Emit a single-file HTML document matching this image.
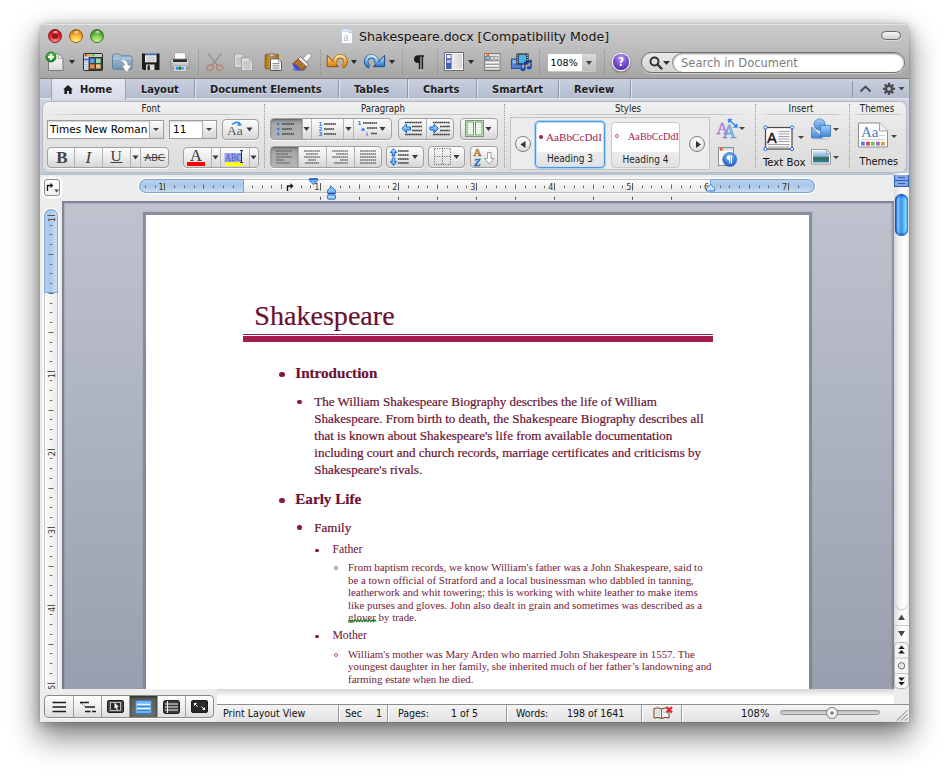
<!DOCTYPE html>
<html lang="en">
<head>
<meta charset="utf-8">
<title>Shakespeare.docx [Compatibility Mode]</title>
<style>
html,body{margin:0;padding:0;background:#fff;}
body{width:949px;height:777px;position:relative;overflow:hidden;font-family:"DejaVu Sans","Liberation Sans",sans-serif;color:#111;}
.a{position:absolute;}
svg{position:absolute;overflow:visible;}
#shadow{left:40px;top:24px;width:869px;height:698px;border-radius:5px 5px 0 0;
  box-shadow:0 14px 30px 2px rgba(0,0,0,.48),0 2px 12px rgba(0,0,0,.28),0 0 1px rgba(0,0,0,.5);}
#win{left:40px;top:24px;width:869px;height:698px;border-radius:5px 5px 0 0;overflow:hidden;background:#ededed;}
#titlebar{left:0;top:0;width:869px;height:54px;background:linear-gradient(#d2d2d2 0,#cacaca 2px,#bfbfbf 40%,#a5a5a5 100%);}
#titlebar:before{content:"";position:absolute;left:0;top:0;right:0;height:1px;background:#e3e3e3;}
#tbline{left:0;top:54px;width:869px;height:1px;background:#7b7b7b;}
#tabbar{left:0;top:55px;width:869px;height:20px;background:linear-gradient(#c9cfdd,#b3bbce);}
#ribbon{left:0;top:75px;width:869px;height:76px;background:linear-gradient(#cbd2df,#c6cede 96%,#b6becd 100%);}
#rpanel{left:3px;top:78px;width:863px;height:70px;border-radius:6px;background:linear-gradient(#f0f0f0,#e5e5e5 40%,#dcdcdc);box-shadow:0 0 0 1px #b4bac8;}
#rulerrow{left:0;top:151px;width:869px;height:26px;background:#ececec;}
#docarea{left:22px;top:177px;width:832px;height:496px;background:linear-gradient(#bec3ce,#999fae 98.4%,#999fae);box-shadow:inset 0 0 2px 2px rgba(100,106,124,.6),inset 1px 1px 1px 1px rgba(100,106,124,.4);overflow:hidden;}
#page{left:84px;top:14px;width:663px;height:520px;background:#fff;box-shadow:0 0 1px 3px rgba(122,128,144,.78);}
#vrcol{left:0;top:177px;width:22px;height:488px;background:#ececec;}
#sbcol{left:854px;top:149px;width:15px;height:531px;background:linear-gradient(90deg,#dcdcdc,#f6f6f6 40%,#fff 70%,#eee);}
#hstrip{left:0;top:665px;width:854px;height:15px;background:linear-gradient(#d9d9d9,#fff 50%,#fff);}
#statusline{left:0;top:680px;width:869px;height:1px;background:#8e8e8e;}
#status{left:0;top:681px;width:869px;height:17px;background:linear-gradient(#f4f4f4,#e2e2e2);}
#pc{left:-40px;top:-24px;width:949px;height:777px;}
.tl{width:14px;height:14px;border-radius:50%;top:29px;box-sizing:border-box;}
#tl-r{left:48px;background:radial-gradient(circle at 50% 95%,#ff9a9a 0,#f4383c 40%,#d81c28 65%,#8e0c14 100%);border:1px solid #8c1a1e;}
#tl-y{left:69px;background:radial-gradient(circle at 50% 95%,#fff08a 0,#fbc848 40%,#ee8f1a 65%,#a8500a 100%);border:1px solid #9a6414;}
#tl-g{left:90px;background:radial-gradient(circle at 50% 95%,#d8f5a0 0,#8fd455 40%,#52aa34 65%,#256a18 100%);border:1px solid #3e7a2a;}
.tl:after{content:"";position:absolute;left:3.500px;top:.5px;width:5px;height:3px;border-radius:50%;background:linear-gradient(rgba(255,255,255,.9),rgba(255,255,255,.1));}
#tl-r:before{content:"";position:absolute;left:3px;top:2.800px;width:6px;height:6px;border-radius:50%;background:#8f1a22;}
#wtitle{left:359px;top:29px;font-size:12.55px;line-height:16px;white-space:nowrap;color:#111;text-shadow:0 1px 0 rgba(255,255,255,.35);}
#pill{left:881px;top:31px;width:20px;height:9px;border-radius:5px;box-sizing:border-box;border:1px solid #6a6a6a;background:linear-gradient(#f4f4f4,#cfcfcf);box-shadow:0 1px 0 rgba(255,255,255,.4);}
.sep{width:0;border-left:1px dotted #8c8c8c;top:50px;height:25px;}
.dd{width:0;height:0;border-left:3.5px solid transparent;border-right:3.5px solid transparent;border-top:4px solid #2a2a2a;}
#zoombox{left:548px;top:54px;width:48px;height:17px;background:linear-gradient(#d9d9d9,#bdbdbd);box-shadow:0 1px 0 rgba(255,255,255,.35);}
#zoombox i{position:absolute;left:0;top:0;width:34px;height:17px;background:#fff;}
#zoombox b{position:absolute;left:2.500px;top:1px;font-weight:normal;font-size:9.500px;line-height:16px;color:#000;}
#help{left:613px;top:53.500px;width:16px;height:16px;border-radius:50%;background:radial-gradient(circle at 50% 25%,#b79af0 0,#7a4fd6 45%,#4a229e 100%);box-shadow:0 0 0 1.300px #f3f0fa,0 1px 2px 1.500px rgba(0,0,0,.3);color:#fff;font:bold 11.500px/16px "DejaVu Sans Condensed","DejaVu Sans",sans-serif;text-align:center;}
#search{left:641px;top:52px;width:264px;height:21px;border-radius:11px;box-sizing:border-box;border:1px solid #6f6f6f;background:linear-gradient(#e9e9e9,#d4d4d4);box-shadow:0 1px 0 rgba(255,255,255,.45);}
#search i{position:absolute;left:31px;top:0;right:0;bottom:0;border-radius:10px;background:#fff;box-shadow:inset 0 1px 2px rgba(0,0,0,.45),-1px 0 0 #8a8a8a;}
#search b{position:absolute;left:39px;top:2px;font-weight:normal;font-size:11.500px;line-height:17px;color:#7d7d7d;white-space:nowrap;}
#pr{left:-40px;top:-24px;width:949px;height:777px;}
.tab{top:80px;height:20px;font:bold 11px/20px "DejaVu Sans Condensed","DejaVu Sans",sans-serif;color:#1c1c1c;text-shadow:0 1px 0 rgba(255,255,255,.55);white-space:nowrap;}
.tsep{top:79px;height:19px;width:1px;background:#8f97ab;box-shadow:1px 0 0 rgba(235,240,250,.7);}
#tabhome{left:52px;top:79px;width:73px;height:21px;background:linear-gradient(#e4e8f1,#d5dbe8);box-shadow:-1px 0 0 #9aa2b5,1px 0 0 #9aa2b5;}
#tabbot{left:40px;top:98px;width:869px;height:2px;background:linear-gradient(#dfe4ee,#d3d9e6);}
.gt{top:103px;height:12px;font:9.6px/12px "DejaVu Sans Condensed","DejaVu Sans",sans-serif;color:#222;text-align:center;white-space:nowrap;}
.gl{top:114px;height:1px;background:linear-gradient(90deg,rgba(190,190,190,0),#c4c4c4 15%,#c4c4c4 85%,rgba(190,190,190,0));}
.vsep{top:104px;height:64px;width:0;border-left:1px dotted #9a9a9a;}
.btn{box-sizing:border-box;border:1px solid #a0a0a0;border-radius:4px;background:linear-gradient(#fcfcfc,#ececec 50%,#d6d6d6);box-shadow:0 1px 0 rgba(255,255,255,.8);}
.btn u{position:absolute;top:0;bottom:0;width:1px;background:#b4b4b4;}
.btn s{position:absolute;top:0;bottom:0;background:linear-gradient(#8f8f8f,#a9a9a9 30%,#b4b4b4);box-shadow:inset 0 1px 2px rgba(0,0,0,.35);}
.fld{box-sizing:border-box;border:1px solid #9d9d9d;background:#fff;box-shadow:inset 0 1px 1px rgba(0,0,0,.18);font:10.5px/17px "DejaVu Sans",sans-serif;color:#000;white-space:nowrap;}
.fld i{position:absolute;top:0;bottom:0;right:0;width:13px;background:linear-gradient(#fdfdfd,#d6d6d6);border-left:1px solid #a9a9a9;}
.d2{width:0;height:0;border-left:3px solid transparent;border-right:3px solid transparent;border-top:3.800px solid #444;}
.lbl{font:11px/14px "DejaVu Sans Condensed","DejaVu Sans",sans-serif;color:#111;white-space:nowrap;}
#gal{left:510px;top:117px;width:200px;height:53px;box-sizing:border-box;border:1px solid #c2c2c2;background:#ececec;}
.tile{box-sizing:border-box;border:1px solid #c9c9c9;border-radius:4px;background:linear-gradient(#fff 0,#fff 66%,#ececec 67%,#e2e2e2 100%);overflow:hidden;}
.tile b{position:absolute;left:0;right:0;bottom:1.700px;text-align:center;font:normal 10px/13px "DejaVu Sans Condensed","DejaVu Sans",sans-serif;color:#222;}
.tile em{position:absolute;top:8px;font:normal 11.2px/14px "Liberation Serif",serif;color:#a21c4d;white-space:nowrap;}
.circ{width:16px;height:16px;border-radius:50%;box-sizing:border-box;border:1px solid #7d7d7d;background:linear-gradient(#fff,#dedede);}
#pu{left:-40px;top:-24px;width:949px;height:777px;}
#hr{left:139px;top:179px;width:676px;height:14px;border-radius:7px;box-sizing:border-box;box-shadow:inset 0 0 0 1px #bdbdbd,0 0 0 1.500px rgba(255,255,255,.8);background:linear-gradient(#fdfdfd,#f4f4f4 45%,#e6e6e6);overflow:hidden;}
#hrL{left:0;top:0;width:105px;height:14px;background:linear-gradient(#bcd5f0,#a9c8ea 45%,#c9def3);box-shadow:inset 0 0 0 1px #7fa5d3;border-radius:7px 0 0 7px;}
#hrR{left:571px;top:0;width:105px;height:14px;background:linear-gradient(#bcd5f0,#a9c8ea 45%,#c9def3);box-shadow:inset 0 0 0 1px #7fa5d3;border-radius:0 7px 7px 0;}
#tabsel{left:44px;top:179px;width:16px;height:17px;box-sizing:border-box;border:1px solid #8f8f8f;border-radius:3px;background:linear-gradient(#fff,#f0f0f0);box-shadow:0 0 0 2.500px rgba(255,255,255,.85);}
#vr{left:44px;top:209px;width:14px;height:500px;border-radius:7px 7px 0 0;box-sizing:border-box;box-shadow:inset 0 0 0 1px #c6c6c6,0 0 0 1.500px rgba(255,255,255,.8);background:linear-gradient(90deg,#fdfdfd,#f4f4f4 45%,#e9e9e9);overflow:hidden;}
#vrT{left:0;top:0;width:14px;height:84px;background:linear-gradient(90deg,#b5d0ee,#a9c8ea 45%,#cfe1f4);box-shadow:inset 0 0 0 1px #7fa5d3;border-radius:7px 7px 0 0;}
#split{left:894px;top:175px;width:15px;height:12px;background:#2f5fb8;}
#split i{position:absolute;left:1px;width:13px;height:5px;background:#86a9e3;}
#split i:after{content:"";position:absolute;left:3px;right:3px;top:2px;height:1px;background:#2f5fb8;}
#thumb{left:895px;top:194px;width:13px;height:42px;border-radius:6.500px;background:linear-gradient(90deg,#1446c0 0,#3f8cf0 14%,#8fd0ff 24%,#56a8f6 34%,#3f92f0 50%,#62c8fc 72%,#86e6ff 84%,#3f8fe8 100%);box-shadow:inset 0 2px 2px rgba(20,60,170,.7),inset 0 -2px 2px rgba(20,60,170,.6),0 0 1px #123a90;}
#trkend{left:895px;top:236px;width:13px;height:373px;border-radius:0 0 6.500px 6.500px;background:linear-gradient(90deg,#d9d9d9,#f3f3f3 35%,#fff 70%,#f4f4f4);box-shadow:0 1px 1px rgba(0,0,0,.25);}
#page div{white-space:nowrap;font-family:"Liberation Serif",serif;color:#6a1131;-webkit-text-stroke:0.2px #6a1131;}
.ttl{font-size:28.08px;}
.h1{font-size:15.12px;font-weight:bold;}
.b2{font-size:13.03px;}
.b3{font-size:11.75px;-webkit-text-stroke:0 !important;}
.b4{font-size:10.9px;-webkit-text-stroke:0 !important;color:#74173a !important;}
.rule{background:#a21c4d;}
.bd{border-radius:50%;background:#8a1740;}
.oc{border-radius:50%;border:.8px solid #a8557a;box-sizing:border-box;}
.gw{text-decoration:none;}
#ps{left:-40px;top:-24px;width:949px;height:777px;}
#vbbg{left:40px;top:689px;width:177px;height:33px;background:#ececec;}
#vb{left:43.500px;top:694.500px;width:170.500px;height:23px;box-sizing:border-box;border:1px solid #8a8a8a;border-radius:4px;background:linear-gradient(#fefefe,#efefef 50%,#dedede);box-shadow:0 1px 0 rgba(255,255,255,.9);overflow:hidden;}
#vb u{position:absolute;top:0;bottom:0;width:1px;background:#9d9d9d;}
#vb s{position:absolute;top:0;bottom:0;left:85px;width:27px;background:linear-gradient(#5a5a5a,#6e6e6e);box-shadow:inset 0 1px 3px rgba(0,0,0,.6);}
.st{top:707.400px;font:10.500px/13px "DejaVu Sans Condensed","DejaVu Sans",sans-serif;color:#111;white-space:nowrap;}
.ss{top:705px;width:1px;height:17px;background:#9a9a9a;box-shadow:1px 0 0 #fff;}
#sbar2{left:217px;top:704px;width:692px;height:1px;background:#8e8e8e;}
#zt{left:780px;top:710px;width:100px;height:5px;box-sizing:border-box;border-radius:3px;border:1px solid #8f8f8f;background:linear-gradient(#b9b9b9,#dcdcdc);}
#zk{left:826px;top:707px;width:11.500px;height:11.500px;box-sizing:border-box;border-radius:50%;border:1px solid #7d7d7d;background:radial-gradient(circle,#777 0,#888 1.300px,#f6f6f6 2.200px,#dcdcdc 100%);}

</style>
</head>
<body>
<div class="a" id="shadow"></div>
<div class="a" id="win">
  <div class="a" id="titlebar"></div>
  <div class="a" id="tbline"></div>
  <div class="a" id="tabbar"></div>
  <div class="a" id="ribbon"></div>
  <div class="a" id="rpanel"></div>
  <div class="a" id="rulerrow"></div>
  <div class="a" id="vrcol"></div>
  <div class="a" id="sbcol"></div>
  <div class="a" id="hstrip"></div>
  <div class="a" id="statusline"></div>
  <div class="a" id="status"></div>
<div class="a" id="pc">
<div class="a tl" id="tl-r"></div><div class="a tl" id="tl-y"></div><div class="a tl" id="tl-g"></div>
<svg style="left:341px;top:28px" width="12" height="16" viewBox="0 0 13 16" preserveAspectRatio="none"><path d="M.5.5h8l4 4v11H.5z" fill="#fdfdfd" stroke="#b9c3cf"/><path d="M8.5.5v4h4" fill="#e8eef5" stroke="#b9c3cf"/><rect x="1" y="1" width="7" height="3" fill="#cfe3f7"/><text x="2.500" y="13.500" font-family="Liberation Serif,serif" font-size="12.500" fill="#8fc0e6">a</text></svg>
<div class="a" id="wtitle">Shakespeare.docx [Compatibility Mode]</div>
<div class="a" id="pill"></div>
<!-- toolbar icons inserted below -->
<!--ICONS_START--><svg style="left:0;top:0" width="949" height="110" viewBox="0 0 949 110">
<defs>
<linearGradient id="gPage" x1="0" y1="0" x2="0" y2="1"><stop offset="0" stop-color="#ffffff"/><stop offset="1" stop-color="#d9d9d9"/></linearGradient>
<radialGradient id="gGreen" cx=".5" cy=".35" r=".7"><stop offset="0" stop-color="#7fe070"/><stop offset=".6" stop-color="#2aa52a"/><stop offset="1" stop-color="#0f6e14"/></radialGradient>
<linearGradient id="gFolder" x1="0" y1="0" x2="0" y2="1"><stop offset="0" stop-color="#a9c4dc"/><stop offset="1" stop-color="#6f93b3"/></linearGradient>
<linearGradient id="gOrange" x1="0" y1="0" x2="0" y2="1"><stop offset="0" stop-color="#ffd98a"/><stop offset=".5" stop-color="#f6a93a"/><stop offset="1" stop-color="#d9801a"/></linearGradient>
<linearGradient id="gBlue" x1="0" y1="0" x2="0" y2="1"><stop offset="0" stop-color="#bfe3fb"/><stop offset=".5" stop-color="#6db3e6"/><stop offset="1" stop-color="#2f78bf"/></linearGradient>
<linearGradient id="gClip" x1="0" y1="0" x2="1" y2="0"><stop offset="0" stop-color="#a86c10"/><stop offset=".45" stop-color="#dba034"/><stop offset="1" stop-color="#a86c10"/></linearGradient>
<linearGradient id="gPrn" x1="0" y1="0" x2="0" y2="1"><stop offset="0" stop-color="#f2f2f2"/><stop offset="1" stop-color="#a9a9a9"/></linearGradient>
<linearGradient id="gSide" x1="0" y1="0" x2="1" y2="0"><stop offset="0" stop-color="#ffffff"/><stop offset="1" stop-color="#d2d2d2"/></linearGradient>
</defs>
<!-- new document -->
<g>
<path d="M48.500 54h10l4.500 4.500V70.500H48.500z" fill="url(#gPage)" stroke="#7a7a7a" stroke-width="1"/>
<path d="M58.500 54v4.500h4.500z" fill="#fafafa" stroke="#8a8a8a" stroke-width=".7"/>
<circle cx="51" cy="57" r="5" fill="url(#gGreen)" stroke="#14691a" stroke-width=".8"/>
<path d="M48 57h6M51 54v6" stroke="#fff" stroke-width="2.200"/>
</g>
<!-- template gallery -->
<g>
<rect x="83.5" y="53.5" width="19" height="17" rx="1" fill="#3b3b3b" stroke="#2a2a2a"/>
<rect x="84" y="54" width="18" height="3" fill="#c9c9c9"/>
<circle cx="86" cy="55.3" r="1.2" fill="#e33"/><circle cx="89.6" cy="55.3" r="1.2" fill="#f5a623"/><circle cx="93.2" cy="55.3" r="1.2" fill="#3c3"/>
<rect x="84" y="57" width="4.5" height="13" fill="#dfe6f2"/>
<rect x="84" y="58.5" width="4.5" height="2" fill="#3d74d6"/>
<path d="M84.6 62.5h3.2M84.6 64.5h3.2M84.6 66.5h3.2M84.6 68.5h3.2" stroke="#9fb0c8" stroke-width=".8"/>
<rect x="90" y="58.5" width="4.6" height="4.6" fill="#5a9be8"/><rect x="96" y="58.5" width="4.6" height="4.6" fill="#8fe0b6"/>
<rect x="90" y="64.3" width="4.6" height="4.2" fill="#f0894a"/><rect x="96" y="64.3" width="4.6" height="4.2" fill="#f6c37a"/>
</g>
<!-- open folder -->
<g>
<path d="M112.500 56q0-2 2-2h5.500l1.500 1.800h8.500q2 0 2 2V67.500q0 1.800-1.800 1.800h-15.900q-1.800 0-1.800-1.800z" fill="url(#gFolder)" stroke="#55779a" stroke-width=".8"/>
<path d="M113 58.800h19" stroke="#c7dbec" stroke-width=".8"/>
<path d="M119.300 60q7.500-2 9 5.300h3.300l-5 7.200-5-7.200h3q-.6-3.800-5.300-5.300z" fill="#fff" stroke="#8a8a8a" stroke-width=".6"/>
</g>
<!-- save floppy -->
<g>
<path d="M142 53.500h17.500v16.500h-16l-1.500-1.500z" fill="#1c1c1c"/>
<rect x="145" y="53.500" width="11.500" height="8.800" fill="#f4f4f4"/>
<rect x="145" y="53.500" width="11.500" height="1.800" fill="#3f6fb8"/>
<path d="M146.200 57.200h9.200M146.200 59h9.200M146.200 60.800h9.200" stroke="#a9a9a9" stroke-width=".8"/>
<rect x="146" y="64.500" width="8.500" height="5.500" fill="#d9d9d9"/>
<rect x="147.500" y="65.300" width="2.300" height="4.700" fill="#1c1c1c"/>
</g>
<!-- printer -->
<g>
<rect x="174.500" y="52.800" width="11" height="7" fill="#fafafa" stroke="#9a9a9a" stroke-width=".7"/>
<path d="M171 61q0-2 2-2h14q2 0 2 2v6.500q0 1-1 1h-16q-1 0-1-1z" fill="url(#gPrn)" stroke="#7d7d7d" stroke-width=".7"/>
<rect x="173" y="59.300" width="14" height="2.700" fill="#2a2a2a"/>
<rect x="174" y="65.500" width="12" height="5.500" fill="#fff" stroke="#8a8a8a" stroke-width=".6"/>
<rect x="175.500" y="66.500" width="3" height="3.300" fill="#2d8cf0"/><rect x="178.500" y="66.500" width="3" height="3.300" fill="#1f6f3a"/><rect x="181.500" y="66.500" width="3" height="3.300" fill="#4aa8f5"/>
<circle cx="172.300" cy="63.400" r=".6" fill="#3c3"/>
</g>
<!-- scissors (disabled) -->
<g opacity=".72" fill="none">
<path d="M208 53.500l9.800 12.300M221.500 53.500l-9.800 12.300" stroke="#7a7a7a" stroke-width="1.100"/>
<ellipse cx="210" cy="67.600" rx="3.200" ry="2.700" stroke="#b87a60" stroke-width="1.500" transform="rotate(-25 210 67.600)"/>
<ellipse cx="219.600" cy="67.600" rx="3.200" ry="2.700" stroke="#b87a60" stroke-width="1.500" transform="rotate(25 219.600 67.600)"/>
<circle cx="214.800" cy="62.300" r=".8" fill="#c9c9c9" stroke="#7a7a7a" stroke-width=".4"/>
</g>
<!-- copy (disabled) -->
<g opacity=".85">
<path d="M234.500 53.800h8l3 3v10.700h-11z" fill="#e2e2e2" stroke="#9a9a9a" stroke-width=".9"/>
<path d="M242.500 53.800v3h3" fill="none" stroke="#9a9a9a" stroke-width=".7"/>
<path d="M236.500 58h7M236.500 60h7M236.500 62h7M236.500 64h7" stroke="#a5a5a5" stroke-width=".8"/>
<path d="M241.500 57.800h8l3 3v9.700h-11z" fill="#e6e6e6" stroke="#9a9a9a" stroke-width=".9"/>
<path d="M249.500 57.800v3h3" fill="none" stroke="#9a9a9a" stroke-width=".7"/>
<path d="M243.500 62h7M243.500 64h7M243.500 66h7M243.500 68h7" stroke="#a5a5a5" stroke-width=".8"/>
</g>
<!-- paste -->
<g>
<rect x="265" y="54.300" width="13.500" height="14.500" rx="1" fill="url(#gClip)" stroke="#8a5a0c" stroke-width=".7"/>
<path d="M268 56.300q0-1.500 1.500-1.500h1q.2-2.300 1.300-2.300t1.300 2.300h1q1.500 0 1.500 1.500z" fill="#c9c9c9" stroke="#6f6f6f" stroke-width=".6"/>
<path d="M270.500 58.800h8l3 3v8.700h-11z" fill="#fdfdfd" stroke="#4a4a4a" stroke-width=".9"/>
<path d="M278.500 58.800v3h3" fill="#e3e3e3" stroke="#6f6f6f" stroke-width=".6"/>
<path d="M272.500 63.500h7M272.500 65.300h7M272.500 67.100h7M272.500 68.900h7" stroke="#777" stroke-width=".8"/>
</g>
<!-- format painter brush -->
<g>
<ellipse cx="299.500" cy="69.500" rx="6.500" ry="1.600" fill="#3a49d6" opacity=".55"/>
<path d="M307.500 53.500q1.500-1 3 .5t.5 3l-4.500 5-3.500-3.500z" fill="#f4f4f4" stroke="#7d7d7d" stroke-width=".7"/>
<path d="M300.500 56.500l8 8-2 2.500-8.500-8z" fill="#e9e9e9" stroke="#555" stroke-width=".7"/>
<path d="M298 59l8.500 8-3.500 2.500q-6 1.500-10.500-6z" fill="#a9661f" stroke="#6a3d0e" stroke-width=".5"/>
<path d="M299.500 60.500l-3.500 4M301.500 62.300l-3.500 4.500M303.500 64.200l-3 4.300" stroke="#e0a45a" stroke-width=".7"/>
<path d="M292.500 63.500q4.500 1 8 5.500l-1 .500q-5.500 1-7-6z" fill="#3848e0"/>
</g>
<!-- undo -->
<g id="undoA">
<path d="M335.600 63.800A5.300 5.300 0 1 1 342.300 66.500" fill="none" stroke="#9a5a10" stroke-width="4.300" stroke-linecap="butt"/>
<path d="M327.200 55.200v11.500h11.300z" fill="#9a5a10" stroke="#9a5a10" stroke-width="1" stroke-linejoin="round"/>
<path d="M335.600 63.800A5.300 5.300 0 1 1 342.200 66.300" fill="none" stroke="url(#gOrange)" stroke-width="2.900"/>
<path d="M327.900 56.800v9.200h9z" fill="url(#gOrange)"/>
<path d="M334 60.500q2.500-4.500 7-4.200" fill="none" stroke="#ffe9b0" stroke-width="1" opacity=".8"/>
</g>
<!-- redo -->
<g transform="translate(711.800 0) scale(-1 1)">
<path d="M335.600 63.800A5.300 5.300 0 1 1 342.300 66.500" fill="none" stroke="#1f4f95" stroke-width="4.300" stroke-linecap="butt"/>
<path d="M327.200 55.200v11.500h11.300z" fill="#1f4f95" stroke="#1f4f95" stroke-width="1" stroke-linejoin="round"/>
<path d="M335.600 63.800A5.300 5.300 0 1 1 342.200 66.300" fill="none" stroke="url(#gBlue)" stroke-width="2.900"/>
<path d="M327.900 56.800v9.200h9z" fill="url(#gBlue)"/>
<path d="M334 60.500q2.500-4.500 7-4.200" fill="none" stroke="#e4f4ff" stroke-width="1" opacity=".8"/>
</g>
<!-- pilcrow -->
<g>
<path d="M424 55.300h-5.800q-4.200.2-4.200 3.900t4.200 3.900h.6v6.300h1.500v-12.700h1.300v12.700h1.500v-12.700h.9z" fill="#1e1e1e"/>
<path d="M418.500 70h5" stroke="#f2f2f2" stroke-width=".8" opacity=".7"/>
</g>
<!-- sidebar -->
<g>
<rect x="444.500" y="52.500" width="19" height="18" fill="url(#gSide)" stroke="#6e6e6e"/>
<rect x="445.500" y="53.500" width="17" height="16" fill="none" stroke="#fff" stroke-width="1"/>
<rect x="446" y="54" width="5.500" height="15" fill="#3a55a8"/>
<rect x="446.800" y="55" width="3.900" height="3.300" fill="#f4f6fb"/><rect x="446.800" y="59.800" width="3.900" height="3.300" fill="#b9c6e6"/><rect x="446.800" y="64.600" width="3.900" height="3.300" fill="#4a66bb"/>
</g>
<!-- toolbox -->
<g>
<rect x="484.500" y="53.500" width="15.500" height="17" fill="#f6f6f6" stroke="#808080"/>
<path d="M485 60.800h14.500M485 64.200h14.500M485 67.600h14.500" stroke="#9a9a9a" stroke-width="1.500"/>
<path d="M484.500 70.300h15.500" stroke="#6a6a6a" stroke-width="1.200"/>
<rect x="485" y="54" width="14.500" height="1.600" fill="#d6d6d6"/>
<rect x="485.500" y="56.200" width="3.800" height="3.600" fill="#7fb6e8" stroke="#555" stroke-width=".5"/><rect x="490.300" y="56.600" width="3.200" height="3" fill="#e6e6e6" stroke="#555" stroke-width=".5"/><rect x="494.800" y="56.600" width="3.200" height="3" fill="#e6e6e6" stroke="#555" stroke-width=".5"/>
<path d="M486.300 53h3l-.3 3h-2.400z" fill="#e23a1a"/><circle cx="487.800" cy="54.300" r=".9" fill="#f8c21a"/>
</g>
<!-- media browser -->
<g>
<rect x="511.500" y="59" width="10" height="9.500" fill="#4f7fd0" stroke="#24509e" stroke-width="1"/>
<rect x="512.500" y="60" width="8" height="3.500" fill="#9cc0f0" opacity=".75"/>
<rect x="516.500" y="53.500" width="12" height="11" fill="#1a1a1a"/>
<rect x="518.700" y="54.600" width="7.600" height="8.800" fill="#4ab4ea"/>
<path d="M517.600 54.500v9.500M527.400 54.500v9.500" stroke="#e8e8e8" stroke-width="1" stroke-dasharray="1.200 1.100"/>
<path d="M524.800 62v7.300M531 60.300v7.300" stroke="#173c8a" stroke-width="1.300"/><path d="M524.200 61.800l7.400-2.200v2.300l-7.400 2.200z" fill="#173c8a"/>
<ellipse cx="523" cy="69.500" rx="2.500" ry="1.800" fill="#1f4fb0"/><ellipse cx="529.200" cy="67.800" rx="2.500" ry="1.800" fill="#1f4fb0"/>
</g>
</svg>
<!--ICONS_END-->
<div class="a sep" style="left:198px"></div>
<div class="a sep" style="left:320px"></div>
<div class="a sep" style="left:402px"></div>
<div class="a sep" style="left:437px"></div>
<div class="a sep" style="left:539px"></div>
<div class="a sep" style="left:604px"></div>
<div class="a dd" style="left:69px;top:60px"></div>
<div class="a dd" style="left:351px;top:60px"></div>
<div class="a dd" style="left:389px;top:60px"></div>
<div class="a dd" style="left:468px;top:60px"></div>
<div class="a" id="zoombox"><i></i><b>108%</b><div class="a dd" style="left:37.5px;top:7px;border-top-color:#444"></div></div>
<div class="a" id="help">?</div>
<div class="a" id="search"><svg style="left:7px;top:3px" width="22" height="14" viewBox="0 0 22 14"><circle cx="5.5" cy="5.5" r="4" fill="none" stroke="#333" stroke-width="2"/><path d="M8.5 8.5l4 4" stroke="#333" stroke-width="2.4" stroke-linecap="round"/><path d="M14 5h7l-3.5 4z" fill="#333"/></svg><i></i><b>Search in Document</b></div>
</div>
<div class="a" id="pr">
<div class="a" id="tabbot"></div>
<div class="a" id="tabhome"></div>
<svg style="left:62.500px;top:84.500px" width="10" height="9" viewBox="0 0 12 11"><path d="M6 0l6 5.600h-1.600V11H7.200V7.200H4.800V11H1.600V5.600H0z" fill="#1c1c1c"/></svg>
<div class="a tab" style="left:80px">Home</div>
<div class="a tab" style="left:141px">Layout</div>
<div class="a tab" style="left:210px">Document Elements</div>
<div class="a tab" style="left:354px">Tables</div>
<div class="a tab" style="left:423px">Charts</div>
<div class="a tab" style="left:492px">SmartArt</div>
<div class="a tab" style="left:574px">Review</div>
<div class="a tsep" style="left:194px"></div><div class="a tsep" style="left:338px"></div><div class="a tsep" style="left:407px"></div><div class="a tsep" style="left:476px"></div><div class="a tsep" style="left:558px"></div><div class="a tsep" style="left:630px"></div><div class="a tsep" style="left:852px;top:81px;height:16px;box-shadow:none"></div>
<svg style="left:859px;top:83.300px" width="46" height="12" viewBox="0 0 46 12"><path d="M1.500 8.500l5-5 5 5" fill="none" stroke="#4a4a4a" stroke-width="1.900"/><g transform="translate(30 5.800)" fill="#4a4a4a"><circle r="4.200"/><g id="gt"><rect x="-1.100" y="-6.100" width="2.200" height="12.200"/></g><use href="#gt" transform="rotate(45)"/><use href="#gt" transform="rotate(90)"/><use href="#gt" transform="rotate(135)"/><circle r="1.900" fill="#bcc4d5"/></g><path d="M39.500 4h6l-3 3.600z" fill="#4a4a4a"/></svg>
<!-- group titles -->
<div class="a gt" style="left:121px;width:60px">Font</div><div class="a gl" style="left:46px;width:214px"></div>
<div class="a gt" style="left:343px;width:80px">Paragraph</div><div class="a gl" style="left:268px;width:232px"></div>
<div class="a gt" style="left:598px;width:60px">Styles</div><div class="a gl" style="left:508px;width:244px"></div>
<div class="a gt" style="left:771px;width:60px">Insert</div><div class="a gl" style="left:759px;width:87px"></div>
<div class="a gt" style="left:847px;width:60px">Themes</div><div class="a gl" style="left:853px;width:51px"></div>
<div class="a vsep" style="left:264px"></div><div class="a vsep" style="left:504px"></div><div class="a vsep" style="left:755px"></div><div class="a vsep" style="left:849px"></div>
<!-- font group -->
<div class="a fld" style="left:47px;top:120px;width:117px;height:19px"><span style="padding-left:2px">Times New Roman</span><i></i><div class="a d2" style="right:4px;top:7px"></div></div>
<div class="a fld" style="left:169px;top:120px;width:48px;height:19px"><span style="padding-left:3px">11</span><i></i><div class="a d2" style="right:4px;top:7px"></div></div>
<div class="a btn" style="left:222px;top:119px;width:37px;height:21px"></div>
<div class="a btn" style="left:47px;top:147px;width:122px;height:21px"><u style="left:26px"></u><u style="left:54px"></u><u style="left:82px"></u><u style="left:92px"></u></div>
<div class="a btn" style="left:183px;top:147px;width:76px;height:21px"><u style="left:27px"></u><u style="left:36px"></u><u style="left:65px"></u></div>
<!-- paragraph group -->
<div class="a btn" style="left:270px;top:118px;width:122px;height:22px"><s style="left:0;width:31px;border-radius:3px 0 0 3px"></s><u style="left:31px"></u><u style="left:40px"></u><u style="left:72px"></u><u style="left:82px"></u></div>
<div class="a btn" style="left:398px;top:118px;width:56px;height:22px"><u style="left:27px"></u></div>
<div class="a btn" style="left:460px;top:118px;width:38px;height:22px"></div>
<div class="a btn" style="left:270px;top:146px;width:112px;height:22px"><s style="left:0;width:27px;border-radius:3px 0 0 3px"></s><u style="left:27px"></u><u style="left:55px"></u><u style="left:83px"></u></div>
<div class="a btn" style="left:386px;top:146px;width:38px;height:22px"></div>
<div class="a btn" style="left:428px;top:146px;width:37px;height:22px"></div>
<div class="a btn" style="left:470px;top:146px;width:28px;height:22px"></div>
<!-- styles -->
<div class="a" id="gal"></div>
<div class="a circ" style="left:515px;top:136px"><svg style="left:3.500px;top:3.500px" width="7" height="7" viewBox="0 0 7 7"><path d="M5.500 0v7L.5 3.500z" fill="#333"/></svg></div>
<div class="a circ" style="left:689px;top:136px"><svg style="left:4.500px;top:3.500px" width="7" height="7" viewBox="0 0 7 7"><path d="M1 0v7l5-3.500z" fill="#333"/></svg></div>
<div class="a tile" style="left:535px;top:121px;width:70px;height:47px;border:1px solid #4a98e0;box-shadow:0 0 0 1px #a9d0f5,inset 0 0 0 1px #c5e0fa;"><i class="a" style="left:3px;top:12.500px;width:4px;height:4px;border-radius:50%;background:#a21c4d"></i><em style="left:10px">AaBbCcDdI</em><b>Heading 3</b></div>
<div class="a tile" style="left:611px;top:121.500px;width:69px;height:46px"><i class="a" style="left:3px;top:11px;width:4px;height:4px;border-radius:50%;border:1px solid #c45a80;box-sizing:border-box"></i><em style="left:16px;font-size:10.2px;top:7px">AaBbCcDdI</em><b style="bottom:1px">Heading 4</b></div>
<!-- labels -->
<div class="a lbl" style="left:763px;top:156px;font-size:11.3px">Text Box</div>
<div class="a lbl" style="left:859.500px;top:155px;font-size:10.8px">Themes</div>
<div class="a d2" style="left:738.500px;top:127px"></div>
<div class="a d2" style="left:798px;top:136px"></div>
<div class="a d2" style="left:833px;top:127.500px"></div>
<div class="a d2" style="left:833px;top:155.500px"></div>
<div class="a d2" style="left:890.500px;top:134.500px"></div>
<!--RI_S--><svg style="left:0;top:0" width="949" height="175" viewBox="0 0 949 175">
<defs>
<linearGradient id="rBlue" x1="0" y1="0" x2="0" y2="1"><stop offset="0" stop-color="#d4ecff"/><stop offset=".5" stop-color="#7cc0f8"/><stop offset="1" stop-color="#3f8fe6"/></linearGradient>
<linearGradient id="rShape" x1="0" y1="0" x2="0" y2="1"><stop offset="0" stop-color="#a8d0f5"/><stop offset="1" stop-color="#3f86d6"/></linearGradient>
<linearGradient id="rPic" x1="0" y1="0" x2="0" y2="1"><stop offset="0" stop-color="#cfe6fa"/><stop offset=".45" stop-color="#7fb3d9"/><stop offset=".6" stop-color="#2f6a4a"/><stop offset="1" stop-color="#3f7fae"/></linearGradient>
<radialGradient id="rOrb" cx=".5" cy=".3" r=".8"><stop offset="0" stop-color="#8fc0f5"/><stop offset=".55" stop-color="#3f7fdc"/><stop offset="1" stop-color="#1c4fb0"/></radialGradient>
<linearGradient id="rGold" x1="0" y1="0" x2="0" y2="1"><stop offset="0" stop-color="#f4c264"/><stop offset="1" stop-color="#b86a10"/></linearGradient>
</defs>
<g font-family="Liberation Serif,serif">
<!-- B I U -->
<text x="56.300" y="163" font-size="17" font-weight="bold" fill="#444">B</text>
<text x="85.500" y="163" font-size="17" font-style="italic" fill="#3c3c3c">I</text>
<text x="110.500" y="160.500" font-size="15.500" fill="#3c3c3c">U</text>
<path d="M110.500 162.500h12" stroke="#3c3c3c" stroke-width="1"/>
<text x="144.500" y="161" font-size="9.500" fill="#3c3c3c" font-family="DejaVu Sans,sans-serif" textLength="20" lengthAdjust="spacingAndGlyphs">ABC</text>
<path d="M143.500 157.500h22" stroke="#3c3c3c" stroke-width=".9"/>
<!-- font color A -->
<text x="190" y="160.800" font-size="16.500" fill="#333">A</text>
<rect x="187" y="162" width="18" height="4" fill="#f00"/>
<!-- highlight -->
<rect x="224.500" y="153" width="17.500" height="9.500" fill="#97a6ea"/>
<text x="225" y="161" font-size="9.500" fill="#4a55b5" textLength="17" lengthAdjust="spacingAndGlyphs">ABC</text>
<rect x="225" y="162.300" width="18" height="3.700" fill="#ff0"/>
<path d="M241.500 150.500v12M240 150.500h3M240 162.500h3" stroke="#222" stroke-width=".9"/>
<!-- Aa -->
<text x="227" y="134.800" font-size="13.500" fill="#5a5a5a">Aa</text>
<path d="M232 124.500q4.500-4 8.500-.5" fill="none" stroke="#3a8ee6" stroke-width="1.500"/><path d="M238.500 121.500l3.500 4-4.500.5z" fill="#3a8ee6"/>
</g>
<g fill="#3a3a3a">
<path d="M132.500 155.500h6l-3 4z"/><path d="M212.500 155.500h6l-3 4z"/><path d="M250.500 155.500h6l-3 4z"/><path d="M246.500 127.500h6l-3 4z"/>
<path d="M303.500 127h6l-3 4z"/><path d="M345.500 127h6l-3 4z"/><path d="M379.500 127h6l-3 4z"/><path d="M485.500 127h6l-3 4z"/>
<path d="M412 155h6l-3 4z"/><path d="M453.500 155h6l-3 4z"/>
</g>
<!-- bullets -->
<g><rect x="277" y="122.800" width="2.400" height="2.400" fill="#2f86ec"/><rect x="277" y="127.800" width="2.400" height="2.400" fill="#2f86ec"/><rect x="277" y="132.800" width="2.400" height="2.400" fill="#2f86ec"/>
<path d="M282 124h12M282 129h10M282 134h12" stroke="#4a4a4a" stroke-width="1.300" stroke-dasharray="1.700 .4"/></g>
<!-- numbering -->
<g font-family="DejaVu Sans,sans-serif" font-size="5.500" font-weight="bold" fill="#2f7fe0"><text x="318.500" y="126">1</text><text x="318.500" y="131">2</text><text x="318.500" y="136">3</text></g>
<path d="M324 124h12M324 129h10M324 134h12" stroke="#3a3a3a" stroke-width="1.300" stroke-dasharray="1.700 .4"/>
<!-- multilevel -->
<g font-family="DejaVu Sans,sans-serif" font-size="5.500" font-weight="bold" fill="#2f7fe0"><text x="357.500" y="125">1</text><text x="361" y="130.500">a</text><text x="366" y="136">i</text></g>
<path d="M363 123h14M367 128h10M371 133.500h6" stroke="#3a3a3a" stroke-width="1.300" stroke-dasharray="1.700 .4"/>
<!-- indent decrease/increase -->
<path d="M405 122.500h17M412 126.500h10M412 130.500h10M405 134.500h17" stroke="#3a3a3a" stroke-width="1.300" stroke-dasharray="1.700 .4"/>
<path d="M402 128.500l4.500-4.300v2.800h4v3h-4v2.800z" fill="url(#rBlue)" stroke="#1660c8" stroke-width="1"/>
<path d="M433 122.500h17M440 126.500h10M440 130.500h10M433 134.500h17" stroke="#3a3a3a" stroke-width="1.300" stroke-dasharray="1.700 .4"/>
<path d="M438.500 128.500l-4.500-4.300v2.800h-4v3h4v2.800z" fill="url(#rBlue)" stroke="#1660c8" stroke-width="1"/>
<!-- columns -->
<rect x="465.500" y="120.500" width="18" height="16" fill="#fff" stroke="#8d8d8d"/>
<rect x="467" y="122" width="6.500" height="13" fill="#f4fbf2" stroke="#4cae3c" stroke-width="1"/><rect x="475.500" y="122" width="6.500" height="13" fill="#f4fbf2" stroke="#4cae3c" stroke-width="1"/>
<path d="M468 125h4.500M468 127.500h4.500M468 130h4.500M468 132.500h4.500M476.500 125h4.500M476.500 127.500h4.500M476.500 130h4.500M476.500 132.500h4.500" stroke="#d0d8cf" stroke-width=".6"/>
<!-- align -->
<g stroke-width="1.200" stroke-dasharray="1.700 .4">
<path d="M276 151h16M276 154h12M276 157h16M276 160h8M276 163h14" stroke="#555"/>
<path d="M304 151h16M306 154h12M304 157h16M308 160h8M305 163h14" stroke="#3a3a3a"/>
<path d="M332 151h16M336 154h12M332 157h16M340 160h8M334 163h14" stroke="#3a3a3a"/>
<path d="M360 151h16M360 154h16M360 157h16M360 160h16M360 163h16" stroke="#3a3a3a"/>
</g>
<!-- line spacing -->
<path d="M398 151h11M398 155h11M398 159h11M398 163h11" stroke="#3a3a3a" stroke-width="1.300" stroke-dasharray="1.700 .4"/>
<path d="M393.500 148.500l3.300 4h-2v3.500h-2.600v-3.500h-2z" fill="url(#rBlue)" stroke="#1660c8" stroke-width=".9"/>
<path d="M393.500 165.500l3.300-4h-2v-3.500h-2.600v3.500h-2z" fill="url(#rBlue)" stroke="#1660c8" stroke-width=".9"/>
<!-- borders -->
<path d="M434.500 148.500h16v16h-16zM442.500 148.500v16M434.500 156.500h16" fill="none" stroke="#555" stroke-width="1" stroke-dasharray="1 1.400"/>
<!-- sort -->
<text x="473.500" y="156" font-family="Liberation Serif,serif" font-size="11" font-weight="bold" fill="url(#rGold)" stroke="#8a4e0c" stroke-width=".3">A</text>
<text x="474" y="166" font-family="Liberation Serif,serif" font-size="11" font-weight="bold" font-style="italic" fill="#2f7fe0" stroke="#1b4fa5" stroke-width=".3">Z</text>
<path d="M487.500 152.500h3.500v6h2.800l-4.600 5.500-4.600-5.500h2.900z" fill="#fff" stroke="#7a7a7a" stroke-width=".7"/>
<!-- AA change styles -->
<text x="716.500" y="134" font-family="Liberation Serif,serif" font-size="16" fill="#b58fe0" stroke="#9a6fd0" stroke-width=".4">A</text>
<text x="722.500" y="138" font-family="Liberation Serif,serif" font-size="19" fill="#9cc0ee" stroke="#4f86cf" stroke-width=".5">A</text>
<path d="M729.500 120.500l6.500 5.500" stroke="#2f86ec" stroke-width="1.600"/><path d="M728 119l4.200.3-3.700 3.400zM737.500 127.500l-4.200-.3 3.700-3.400z" fill="#2f86ec" stroke="#2f86ec" stroke-width=".6"/>
<!-- styles pane -->
<rect x="718.500" y="147.500" width="15" height="18" fill="#f7f7f7" stroke="#8d8d8d"/>
<rect x="719" y="148" width="14" height="2.500" fill="#d9d9d9"/><path d="M720 147.500h2.500v3h-2.500z" fill="#e23a1a"/><circle cx="721.200" cy="148.500" r=".7" fill="#f8c21a"/>
<circle cx="729.700" cy="159.500" r="7" fill="url(#rOrb)" stroke="#2a5fc0" stroke-width=".6"/>
<path d="M732.500 155.500h-3.600q-2.400.1-2.400 2.200t2.400 2.200h.3v3.600h1v-7.200h.8v7.200h1v-7.200h.5z" fill="#fff"/>
<!-- text box -->
<rect x="765.500" y="127.500" width="26.500" height="21.500" fill="#fbf7fb" stroke="#4a4a4a" stroke-width="1.200"/>
<text x="767" y="143" font-family="Liberation Sans,sans-serif" font-size="14.500" fill="#111" stroke="#111" stroke-width=".4">A</text>
<path d="M778.500 131.500h11M778.500 134h11M778.500 136.500h11M778.500 139h11M778.500 141.500h11M768 144.500h21.500M768 147h21.500" stroke="#8a8a8a" stroke-width=".8"/>
<g fill="#fff" stroke="#2a62d8" stroke-width="1"><circle cx="765.500" cy="127.500" r="1.600"/><circle cx="792" cy="127.500" r="1.600"/><circle cx="765.500" cy="149" r="1.600"/><circle cx="792" cy="149" r="1.600"/></g>
<!-- shapes -->
<circle cx="819.600" cy="124.500" r="5.600" fill="url(#rShape)" stroke="#2f6fc0" stroke-width=".7"/>
<path d="M811.500 127v11h11z" fill="url(#rShape)" stroke="#2f6fc0" stroke-width=".7"/>
<rect x="820.300" y="125.500" width="10.300" height="11" fill="url(#rShape)" stroke="#2f6fc0" stroke-width=".7"/>
<path d="M813 139h17" stroke="#777" stroke-width=".6" opacity=".5"/>
<!-- picture -->
<path d="M811.500 149.500h15l4 4v10.500h-19z" fill="#fff" stroke="#8d8d8d" stroke-width=".9"/>
<path d="M813 151h13l3 3.500v8h-16z" fill="url(#rPic)"/>
<path d="M826.500 149.500v4h4z" fill="#f2f2f2" stroke="#8d8d8d" stroke-width=".7"/>
<!-- themes -->
<path d="M858.500 123h21l8 8v16h-29z" fill="#fff" stroke="#8d8d8d" stroke-width="1"/>
<path d="M879.500 123v8h8" fill="#efefef" stroke="#8d8d8d" stroke-width=".8"/>
<text x="861" y="137" font-family="Liberation Serif,serif" font-size="15" fill="#3f7fd0">Aa</text>
<path d="M861 139.500h24M879 135.500h6" stroke="#cfcfcf" stroke-width="1"/>
<rect x="861" y="141.700" width="3.800" height="3.800" fill="#4a86d8"/><rect x="866" y="141.700" width="3.800" height="3.800" fill="#e0445a"/><rect x="871" y="141.700" width="3.800" height="3.800" fill="#78c24a"/><rect x="876" y="141.700" width="3.800" height="3.800" fill="#a860d0"/><rect x="881" y="141.700" width="3.800" height="3.800" fill="#f09a3a"/>
</svg>
<!--RI_E-->
</div>
<div class="a" id="pu">
<div class="a" id="hr"><div class="a" id="hrL"></div><div class="a" id="hrR"></div></div>
<svg style="left:0;top:170px" width="949" height="40" viewBox="0 170 949 40"><path d="M145.5 185.6v2.5M155.5 185.6v2.5M174.5 185.6v2.5M184.5 185.6v2.5M194.5 185.6v2.5M203.5 184.5v4.5M213.5 185.6v2.5M223.5 185.6v2.5M233.5 185.6v2.5M252.5 185.6v2.5M262.5 185.6v2.5M271.5 185.6v2.5M281.5 184.5v4.5M291.5 185.6v2.5M301.5 185.6v2.5M310.5 185.6v2.5M330.5 185.6v2.5M340.5 185.6v2.5M349.5 185.6v2.5M359.5 184.5v4.5M369.5 185.6v2.5M379.5 185.6v2.5M388.5 185.6v2.5M408.5 185.6v2.5M418.5 185.6v2.5M427.5 185.6v2.5M437.5 184.5v4.5M447.5 185.6v2.5M457.5 185.6v2.5M466.5 185.6v2.5M486.5 185.6v2.5M496.5 185.6v2.5M505.5 185.6v2.5M515.5 184.5v4.5M525.5 185.6v2.5M535.5 185.6v2.5M544.5 185.6v2.5M564.5 185.6v2.5M574.5 185.6v2.5M583.5 185.6v2.5M593.5 184.5v4.5M603.5 185.6v2.5M613.5 185.6v2.5M622.5 185.6v2.5M642.5 185.6v2.5M651.5 185.6v2.5M661.5 185.6v2.5M671.5 184.5v4.5M681.5 185.6v2.5M690.5 185.6v2.5M700.5 185.6v2.5M720.5 185.6v2.5M729.5 185.6v2.5M739.5 185.6v2.5M749.5 184.5v4.5M759.5 185.6v2.5M768.5 185.6v2.5M778.5 185.6v2.5M798.5 185.6v2.5" stroke="#666" stroke-width="1" fill="none"/><text x="163.6" y="190" font-size="9" text-anchor="end" font-family="DejaVu Sans Condensed,DejaVu Sans,sans-serif" fill="#333">1</text><path d="M164.5 183v7.500" stroke="#555" stroke-width="1"/><text x="319.5" y="190" font-size="9" text-anchor="end" font-family="DejaVu Sans Condensed,DejaVu Sans,sans-serif" fill="#333">1</text><path d="M320.5 183v7.500" stroke="#555" stroke-width="1"/><text x="397.4" y="190" font-size="9" text-anchor="end" font-family="DejaVu Sans Condensed,DejaVu Sans,sans-serif" fill="#333">2</text><path d="M398.5 183v7.500" stroke="#555" stroke-width="1"/><text x="475.4" y="190" font-size="9" text-anchor="end" font-family="DejaVu Sans Condensed,DejaVu Sans,sans-serif" fill="#333">3</text><path d="M476.5 183v7.500" stroke="#555" stroke-width="1"/><text x="553.3" y="190" font-size="9" text-anchor="end" font-family="DejaVu Sans Condensed,DejaVu Sans,sans-serif" fill="#333">4</text><path d="M554.5 183v7.500" stroke="#555" stroke-width="1"/><text x="631.3" y="190" font-size="9" text-anchor="end" font-family="DejaVu Sans Condensed,DejaVu Sans,sans-serif" fill="#333">5</text><path d="M632.5 183v7.500" stroke="#555" stroke-width="1"/><text x="709.2" y="190" font-size="9" text-anchor="end" font-family="DejaVu Sans Condensed,DejaVu Sans,sans-serif" fill="#333">6</text><text x="787.2" y="190" font-size="9" text-anchor="end" font-family="DejaVu Sans Condensed,DejaVu Sans,sans-serif" fill="#333">7</text><path d="M788.5 183v7.500" stroke="#555" stroke-width="1"/><path d="M320.5 196.8v3M359.5 196.8v3M398.5 196.8v3M437.5 196.8v3M476.5 196.8v3M515.5 196.8v3M554.5 196.8v3M593.5 196.8v3M632.5 196.8v3M671.5 196.8v3" stroke="#555" stroke-width="1" fill="none"/><path d="M287.500 191v-5h3.500" fill="none" stroke="#111" stroke-width="1.400"/><path d="M290.500 183.300l3 2.700-3 2.700z" fill="#111"/><path d="M309.500 178.500h8v2.300l-4 4-4-4z" fill="#6fb0f5" stroke="#1f5fc0" stroke-width=".8"/><path d="M309.500 179.300h8" stroke="#2a6fd8" stroke-width="1.600"/><path d="M331.500 186.300l4 4v2.700h-8v-2.700z" fill="#7fbcf8" stroke="#1f5fc0" stroke-width=".8"/><path d="M327.500 193.600h8" stroke="#1a3a8a" stroke-width="1"/><rect x="327.500" y="194.800" width="8" height="4.400" rx="1" fill="#7fbcf8" stroke="#1f5fc0" stroke-width=".8"/><path d="M328.500 197h6" stroke="#e8f4ff" stroke-width="1"/><path d="M710.500 184.300l4 4v2.700h-8v-2.700z" fill="#cfe6fd" stroke="#1f5fc0" stroke-width=".8"/></svg>
<div class="a" id="tabsel"><svg style="left:-1px;top:-1px" width="16" height="17" viewBox="44 179 16 17"><path d="M47.500 191v-5.500h3.500" fill="none" stroke="#111" stroke-width="1.300"/><path d="M50.500 182.800l2.800 2.700-2.800 2.700z" fill="#111"/><path d="M54.300 189.400h4.600l-2.300 3z" fill="#4a4a4a"/></svg></div>
<div class="a" id="vr"><div class="a" id="vrT"></div></div>
<svg style="left:40px;top:205px" width="22" height="484" viewBox="40 205 22 484"><path d="M49.800 225.5h2.500M49.800 234.5h2.500M49.800 244.5h2.500M48.500 254.5h5M49.800 264.5h2.500M49.800 273.5h2.500M49.800 283.5h2.500M48.500 293.5h5M49.800 303.5h2.500M49.800 312.5h2.500M49.800 322.5h2.500M48.500 332.5h5M49.800 342.5h2.500M49.800 351.5h2.500M49.800 361.5h2.500M48.500 371.5h5M49.800 380.5h2.500M49.800 390.5h2.500M49.800 400.5h2.500M48.500 410.5h5M49.800 419.5h2.500M49.800 429.5h2.500M49.800 439.5h2.500M48.500 449.5h5M49.800 458.5h2.500M49.800 468.5h2.500M49.800 478.5h2.500M48.500 488.5h5M49.800 497.5h2.500M49.800 507.5h2.500M49.800 517.5h2.500M48.500 527.5h5M49.800 536.5h2.500M49.800 546.5h2.500M49.800 556.5h2.500M48.500 566.5h5M49.800 575.5h2.500M49.800 585.5h2.500M49.800 595.5h2.500M48.500 605.5h5M49.800 614.5h2.500M49.800 624.5h2.500M49.800 634.5h2.500M48.500 644.5h5M49.800 653.5h2.500M49.800 663.5h2.500M49.800 673.5h2.500M48.500 683.5h5" stroke="#666" stroke-width="1" fill="none"/><path d="M47.500 215.5h7.500" stroke="#555" stroke-width="1"/><text transform="translate(54.500 217.2) rotate(-90)" font-size="9" text-anchor="end" font-family="DejaVu Sans Condensed,DejaVu Sans,sans-serif" fill="#333">1</text><path d="M47.500 371.5h7.500" stroke="#555" stroke-width="1"/><text transform="translate(54.500 373.1) rotate(-90)" font-size="9" text-anchor="end" font-family="DejaVu Sans Condensed,DejaVu Sans,sans-serif" fill="#333">1</text><path d="M47.500 449.5h7.500" stroke="#555" stroke-width="1"/><text transform="translate(54.500 451.0) rotate(-90)" font-size="9" text-anchor="end" font-family="DejaVu Sans Condensed,DejaVu Sans,sans-serif" fill="#333">2</text><path d="M47.500 527.5h7.500" stroke="#555" stroke-width="1"/><text transform="translate(54.500 529.0) rotate(-90)" font-size="9" text-anchor="end" font-family="DejaVu Sans Condensed,DejaVu Sans,sans-serif" fill="#333">3</text><path d="M47.500 605.5h7.500" stroke="#555" stroke-width="1"/><text transform="translate(54.500 606.9) rotate(-90)" font-size="9" text-anchor="end" font-family="DejaVu Sans Condensed,DejaVu Sans,sans-serif" fill="#333">4</text><path d="M47.500 683.5h7.500" stroke="#555" stroke-width="1"/><text transform="translate(54.500 684.8) rotate(-90)" font-size="9" text-anchor="end" font-family="DejaVu Sans Condensed,DejaVu Sans,sans-serif" fill="#333">5</text></svg>
<div class="a" id="split"><i style="top:0"></i><i style="top:6px"></i></div>
<div class="a" id="thumb"></div>
<div class="a" id="trkend"></div>
<svg style="left:894px;top:609px" width="15" height="80" viewBox="0 0 15 80">
<path d="M0 16.500h15" stroke="#c9c9c9" stroke-width="1"/>
<path d="M7.500 5.500l3.500 5.500h-7zM7.500 27.500l3.500-5.500h-7z" fill="#4a4a4a"/>
<rect x=".5" y="33.500" width="14" height="46" rx="4" fill="#f4f4f4" stroke="#b5b5b5"/>
<path d="M.5 49h14M.5 64.500h14" stroke="#c4c4c4"/>
<path d="M7.500 36.500l3.300 3.500h-6.600zM7.500 41l3.300 3.500h-6.600z" fill="#1c1c1c"/>
<circle cx="7.500" cy="56.800" r="3.200" fill="#e9e9e9" stroke="#6a6a6a" stroke-width="1"/>
<path d="M7.500 76.500l3.300-3.500h-6.600zM7.500 72l3.300-3.500h-6.600z" fill="#1c1c1c"/>
</svg>
</div>
<div class="a" id="docarea"><div class="a" id="page">
<div class="a ttl" style="left:108.3px;top:85.0px;line-height:31px">Shakespeare</div>
<div class="a rule" style="left:97px;top:119px;width:470px;height:1px"></div>
<div class="a rule" style="left:97px;top:121px;width:470px;height:6px"></div>
<div class="a bd" style="left:133.3px;top:156.6px;width:5.4px;height:5.4px"></div>
<div class="a h1" style="left:149.3px;top:149.8px;line-height:16px">Introduction</div>
<div class="a bd" style="left:151.4px;top:184.6px;width:4.4px;height:4.4px"></div>
<div class="a b2" style="left:168.3px;top:178.8px;line-height:15px">The William Shakespeare Biography describes the life of William</div>
<div class="a b2" style="left:168.3px;top:195.9px;line-height:15px">Shakespeare. From birth to death, the Shakespeare Biography describes all</div>
<div class="a b2" style="left:168.3px;top:213.0px;line-height:15px">that is known about Shakespeare's life from available documentation</div>
<div class="a b2" style="left:168.3px;top:230.1px;line-height:15px">including court and church records, marriage certificates and criticisms by</div>
<div class="a b2" style="left:168.3px;top:247.2px;line-height:15px">Shakespeare's rivals.</div>
<div class="a bd" style="left:133.3px;top:282.9px;width:5.4px;height:5.4px"></div>
<div class="a h1" style="left:149.3px;top:275.8px;line-height:16px">Early Life</div>
<div class="a bd" style="left:151.4px;top:310.4px;width:4.4px;height:4.4px"></div>
<div class="a b2" style="left:168.3px;top:304.5px;line-height:15px">Family</div>
<div class="a bd" style="left:169.3px;top:333.7px;width:3.8px;height:3.8px"></div>
<div class="a b3" style="left:186.4px;top:327.8px;line-height:13px">Father</div>
<div class="a oc" style="left:187.9px;top:350.6px;width:4.6px;height:4.6px"></div>
<div class="a b4" style="left:202.0px;top:345.6px;line-height:12px">From baptism records, we know William's father was a John Shakespeare, said to</div>
<div class="a b4" style="left:202.0px;top:358.6px;line-height:12px">be a town official of Stratford and a local businessman who dabbled in tanning,</div>
<div class="a b4" style="left:202.0px;top:371.0px;line-height:12px">leatherwork and whit towering; this is working with white leather to make items</div>
<div class="a b4" style="left:202.0px;top:383.5px;line-height:12px">like purses and gloves. John also dealt in grain and sometimes was described as a</div>
<div class="a b4" style="left:202.0px;top:395.7px;line-height:12px"><span class="gw">glover</span> by trade.</div>
<div class="a bd" style="left:169.3px;top:419.7px;width:3.8px;height:3.8px"></div>
<div class="a b3" style="left:186.4px;top:413.8px;line-height:13px">Mother</div>
<div class="a oc" style="left:187.9px;top:437.9px;width:4.6px;height:4.6px"></div>
<div class="a b4" style="left:202.0px;top:432.8px;line-height:12px">William's mother was Mary Arden who married John Shakespeare in 1557. The</div>
<div class="a b4" style="left:202.0px;top:445.0px;line-height:12px">youngest daughter in her family, she inherited much of her father’s landowning and</div>
<div class="a b4" style="left:202.0px;top:457.6px;line-height:12px">farming estate when he died.</div>
<svg style="left:0;top:0" width="663" height="480"><path d="M202.3 406.6 l1.4 -1.6 l1.4 1.6 l1.4 -1.6 l1.4 1.6 l1.4 -1.6 l1.4 1.6 l1.4 -1.6 l1.4 1.6 l1.4 -1.6 l1.4 1.6 l1.4 -1.6 l1.4 1.6 l1.4 -1.6 l1.4 1.6 l1.4 -1.6 l1.4 1.6 l1.4 -1.6 l1.4 1.6 l1.4 -1.6 l1.4 1.6" fill="none" stroke="#1f7f2a" stroke-width="1.200"/></svg>
</div></div>
<div class="a" id="ps">
<div class="a" style="left:40px;top:689px;width:854px;height:15px;background:linear-gradient(#d6d6d6,#fff 55%,#fff)"></div><div class="a" id="vbbg"></div><div class="a" style="left:894px;top:689px;width:15px;height:15px;background:#ececec"></div>
<div class="a" id="sbar2"></div>
<div class="a" id="vb"><s></s><u style="left:28px"></u><u style="left:56px"></u><u style="left:84px"></u><u style="left:112px"></u><u style="left:140px"></u>
<svg style="left:0;top:0" width="170" height="23" viewBox="0 0 170 23">
<path d="M7.500 6.500h13.500M7.500 11h13.500M7.500 15.500h13.500" stroke="#1c1c1c" stroke-width="1.600"/>
<path d="M35 6.500h9M40 11h10M40 15.500h5.500M47 15.500h4" stroke="#1c1c1c" stroke-width="1.500"/><path d="M36 7l3.500 3" stroke="#1c1c1c" stroke-width="1" stroke-dasharray="1 1"/>
<rect x="62.500" y="4.500" width="16" height="12" rx="1.500" fill="#4a4a4a" stroke="#1c1c1c"/><rect x="65.500" y="6.500" width="10" height="8" fill="#2a2a2a" stroke="#ddd" stroke-width=".8"/><path d="M69.500 6.500l4.500 4.500h-2l1 2.500-1.200.5-1-2.500-1.300 1.300z" fill="#fff"/>
<rect x="90.500" y="4.500" width="16" height="13" rx="2" fill="#6fb6f5" stroke="#2f7fd6"/><path d="M92 8.500h13M92 12.500h13" stroke="#e8f4ff" stroke-width="1.600"/><path d="M92 10.500h13M92 14.500h13" stroke="#2f7fd6" stroke-width="1"/>
<rect x="118.500" y="4.500" width="16" height="13" rx="2" fill="#3a3a3a" stroke="#1c1c1c"/><path d="M120 8h13M120 11h13M120 14h13" stroke="#f2f2f2" stroke-width="1.200"/><path d="M122.500 5v12" stroke="#f2f2f2" stroke-width="1"/>
<rect x="146.500" y="4.500" width="16" height="12" rx="1.500" fill="#2a2a2a" stroke="#1c1c1c"/><path d="M149 7h3l-3 3zM160 14h-3l3-3z" fill="#fff"/><path d="M150 8l2.500 2.500M159 13l-2.500-2.500" stroke="#fff" stroke-width="1"/>
</svg></div>
<div class="a st" style="left:223px">Print Layout View</div>
<div class="a ss" style="left:338px"></div>
<div class="a st" style="left:345px">Sec</div><div class="a st" style="left:376px">1</div>
<div class="a ss" style="left:387px"></div>
<div class="a st" style="left:398px">Pages:</div><div class="a st" style="left:451px">1 of 5</div>
<div class="a ss" style="left:506px"></div>
<div class="a st" style="left:516px">Words:</div><div class="a st" style="left:567px">198 of 1641</div>
<div class="a ss" style="left:641px"></div>
<svg style="left:653px;top:706px" width="21" height="14" viewBox="0 0 21 14"><path d="M1 2.500q4-1.500 7.500.5q3.500-2 7.500-.5V12q-4-1.500-7.500.5Q5 10.500 1 12z" fill="#f4f4f4" stroke="#6a3a1a" stroke-width="1"/><path d="M8.500 3v9.500" stroke="#6a3a1a" stroke-width=".8"/><path d="M2.500 5q2.500-.8 4.500 0M2.500 7q2.500-.8 4.500 0M2.500 9q2.500-.8 4.500 0M10 5q2.500-.8 4.500 0M10 7q2.500-.8 4.500 0" stroke="#aaa" stroke-width=".6" fill="none"/><path d="M13.500 1l5.500 5.500M19 1l-5.500 5.500" stroke="#e0202a" stroke-width="2.200"/></svg>
<div class="a ss" style="left:681px"></div>
<div class="a st" style="left:741px;font-size:11px">108%</div>
<div class="a" id="zt"></div><div class="a" id="zk"></div>
<svg style="left:895.500px;top:708.500px" width="12" height="12" viewBox="0 0 12 12"><path d="M1 11.500L11.500 1M5 11.500L11.500 5M9 11.500l2.500-2.500" stroke="#7d7d7d" stroke-width="1"/></svg>
</div>

</div>
</body>
</html>
